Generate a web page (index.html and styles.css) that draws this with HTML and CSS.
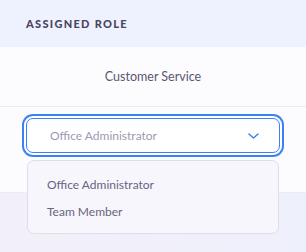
FILE: index.html
```html
<!DOCTYPE html>
<html lang="en">
<head>
  <meta charset="UTF-8" />
  <title>Assigned Role</title>
  <link rel="stylesheet" href="styles.css">
</head>
<body>

<div class="table">
  <div class="table-head">Assigned Role</div>
  <div class="table-cell">Customer Service</div>
  <div class="table-cell edit">
    <div class="select">
      <span class="select-value">Office Administrator</span>
      <svg class="chevron" width="11" height="6" viewBox="0 0 11 6">
        <path d="M1 1l4.5 4 4.5-4" fill="none" stroke="#3b82f6" stroke-width="1.5" stroke-linecap="round" stroke-linejoin="round"/>
      </svg>
      <ul class="menu">
        <li>Office Administrator</li>
        <li>Team Member</li>
      </ul>
    </div>
  </div>
</div>

</body>
</html>
```

FILE: styles.css
```css
body {
  margin: 0;
  font-family: "Lato", "Open Sans", sans-serif;
  background: linear-gradient(90deg, #f3eff9, #eef0fb);
  height: 252px;
  overflow: hidden;
}

.table-head {
  height: 47px;
  box-sizing: border-box;
  display: flex;
  align-items: center;
  padding-left: 26px;
  background: #eef2fe;
  color: #4a4562;
  font-size: 11px;
  font-weight: 900;
  letter-spacing: 1.3px;
  text-transform: uppercase;
}

.table-cell {
  background: #fcfcfe;
  border-bottom: 1px solid #ebebf3;
  color: #5a5672;
  font-size: 12.5px;
  height: 59px;
  display: flex;
  align-items: center;
  justify-content: center;
}

.table-cell.edit {
  height: 86px;
  align-items: flex-start;
  justify-content: flex-start;
  padding: 11px 0 0 26px;
  box-sizing: border-box;
}

.select {
  position: relative;
  width: 254px;
  height: 35px;
  box-sizing: border-box;
  border: 1px solid #3b82f6;
  border-radius: 7px;
  background: #fff;
  box-shadow: 0 0 0 2px #fff, 0 0 0 4px #3b82f6;
  display: flex;
  align-items: center;
  justify-content: space-between;
  padding: 0 20px 0 23px;
}

.select-value {
  color: #9d9ab4;
  font-size: 12px;
}

.menu {
  position: absolute;
  top: 41px;
  left: 0;
  width: 252px;
  box-sizing: border-box;
  margin: 0;
  padding: 10px 0 8px 19px;
  list-style: none;
  background: #f7f6fd;
  border: 1px solid #dfdcec;
  border-radius: 7px;
  color: #68647f;
  font-size: 12px;
}

.menu li {
  line-height: 27px;
}
```
